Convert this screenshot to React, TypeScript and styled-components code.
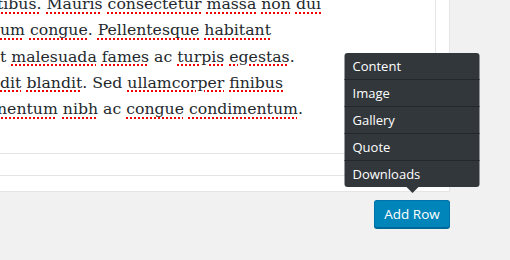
import React from 'react';
import styled, { createGlobalStyle } from 'styled-components';

const GlobalStyle = createGlobalStyle`
  html, body {
    margin: 0;
    padding: 0;
    background: #f1f1f1;
  }
  body {
    font-family: "Open Sans", "Noto Sans", sans-serif;
    overflow: hidden;
  }
`;

const Page = styled.div`
  width: 510px;
  height: 260px;
  display: flex;
  flex-direction: column;
`;

const Panel = styled.div`
  width: 449px;
  background: #fff;
  border-right: 1px solid #e5e5e5;
  border-bottom: 1px solid #e5e5e5;
  display: flex;
  flex-direction: column;
`;

const EditorBody = styled.div`
  height: 154px;
  width: 436px;
  border-right: 1px solid #e5e5e5;
  border-bottom: 1px solid #e5e5e5;
  overflow: hidden;
  box-sizing: border-box;
`;

const Text = styled.div`
  margin-top: -9px;
  font-family: "DejaVu Serif", "Liberation Serif", serif;
  font-size: 15.7px;
  line-height: 26.3px;
  color: #23282d;
  white-space: nowrap;
`;

const Line = styled.div<{ $indent?: number }>`
  text-indent: ${p => p.$indent ?? 0}px;
`;

const Typo = styled.span`
  text-decoration: underline dotted #e00;
  text-decoration-thickness: 2px;
  text-underline-offset: 3px;
`;

const StatusRow = styled.div<{ $h: number; $last?: boolean }>`
  height: ${p => p.$h}px;
  border-bottom: ${p => (p.$last ? 'none' : '1px solid #e5e5e5')};
`;

const Footer = styled.div`
  width: 450px;
  display: flex;
  justify-content: flex-end;
  padding-top: 8px;
`;

const AddWrap = styled.div`
  position: relative;
`;

const Button = styled.button`
  height: 28px;
  width: 76px;
  padding: 0;
  background: #0085ba;
  border: 1px solid #0073aa;
  border-bottom-color: #006799;
  border-radius: 3px;
  box-shadow: 0 1px 0 #006799;
  color: #fff;
  font-family: "Open Sans", "Noto Sans", sans-serif;
  font-size: 13.5px;
  cursor: pointer;
`;

const Menu = styled.ul`
  position: absolute;
  bottom: calc(100% + 13px);
  left: 50%;
  transform: translateX(-50%);
  margin: 0;
  padding: 0;
  list-style: none;
  width: 135px;
  background: #32373c;
  border-radius: 3px;

  &::after {
    content: '';
    position: absolute;
    left: 50%;
    top: 100%;
    margin-left: -6px;
    border: 6px solid transparent;
    border-top-color: #32373c;
    border-bottom: none;
  }
`;

const MenuItem = styled.li`
  height: 26px;
  line-height: 26px;
  padding-left: 8px;
  color: #fff;
  font-size: 13px;
  & + & {
    border-top: 1px solid #23282d;
  }
`;

const items = ['Content', 'Image', 'Gallery', 'Quote', 'Downloads'];

export default function App() {
  return (
    <Page>
      <GlobalStyle />
      <Panel>
        <EditorBody>
          <Text>
            <Line $indent={-3}>
              <Typo>tibus.</Typo> <Typo>Mauris</Typo> <Typo>consectetur</Typo> <Typo>massa</Typo> <Typo>non</Typo>{' '}
              <Typo>dui</Typo>
            </Line>
            <Line>
              <Typo>um</Typo> <Typo>congue</Typo>. <Typo>Pellentesque</Typo> <Typo>habitant</Typo>
            </Line>
            <Line>
              t <Typo>malesuada</Typo> <Typo>fames</Typo> ac <Typo>turpis</Typo> <Typo>egestas</Typo>.
            </Line>
            <Line>
              <Typo>dit</Typo> <Typo>blandit</Typo>. Sed <Typo>ullamcorper</Typo> <Typo>finibus</Typo>
            </Line>
            <Line $indent={-3}>
              <Typo>nentum</Typo> <Typo>nibh</Typo> ac <Typo>congue</Typo> <Typo>condimentum</Typo>.
            </Line>
          </Text>
        </EditorBody>
        <StatusRow $h={21} />
        <StatusRow $h={15} $last />
      </Panel>
      <Footer>
        <AddWrap>
          <Menu>
            {items.map(i => (
              <MenuItem key={i}>{i}</MenuItem>
            ))}
          </Menu>
          <Button>Add Row</Button>
        </AddWrap>
      </Footer>
    </Page>
  );
}
